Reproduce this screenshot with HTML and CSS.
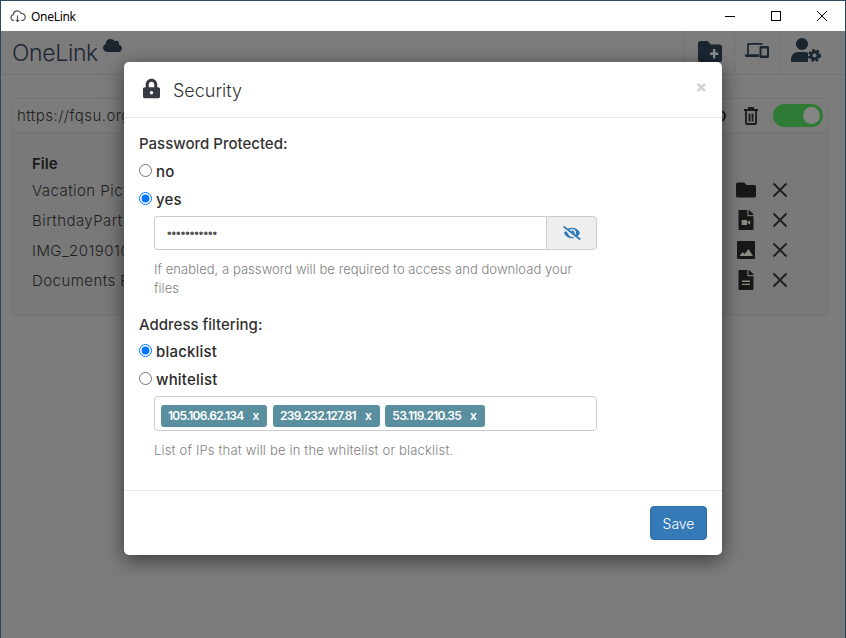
FILE: index.html
```html
<!DOCTYPE html>
<html lang="en">
<head>
<meta charset="utf-8">
<title>OneLink</title>
<link rel="stylesheet" href="styles.css">
</head>
<body>
<div class="window">
  <header class="titlebar">
    <svg class="app-icon" viewBox="0 0 16 14"><path d="M4 11.5H3.6A3 3 0 0 1 3.3 5.6 4 4 0 0 1 11 4.4 3.4 3.4 0 0 1 12.2 11.5H11" fill="none" stroke="#555" stroke-width="1.2"/><path d="M7.5 6.5v6M5.8 10.8l1.7 1.7 1.7-1.7" fill="none" stroke="#555" stroke-width="1.1"/></svg>
    <span class="app-name">OneLink</span>
    <div class="win-controls">
      <svg class="win-btn" viewBox="0 0 46 30"><path d="M18 15.5h10" stroke="#000"/></svg>
      <svg class="win-btn" viewBox="0 0 46 30"><rect x="18.5" y="10.5" width="9" height="9" fill="none" stroke="#000"/></svg>
      <svg class="win-btn" viewBox="0 0 46 30"><path d="M18 10l10 10M28 10l-10 10" stroke="#000"/></svg>
    </div>
  </header>
  <div class="app">
    <nav class="navbar">
      <div class="brand"><span class="brand-name">OneLink</span>
        <svg class="brand-cloud" viewBox="0 32 640 448" preserveAspectRatio="none"><path d="M537.6 226.6c4.1-10.7 6.4-22.4 6.4-34.6 0-53-43-96-96-96-19.7 0-38.1 6-53.3 16.2C367 64.2 315.3 32 256 32c-88.4 0-160 71.6-160 160 0 2.7.1 5.4.2 8.1C40.2 219.8 0 273.2 0 336c0 79.5 64.5 144 144 144h368c70.7 0 128-57.3 128-128 0-61.9-44-113.6-102.4-125.4z"/></svg>
      </div>
      <div class="nav-actions">
        <div class="nav-item nav-a"><svg class="nav-folder" viewBox="0 64 512 384" preserveAspectRatio="none"><path d="M464 128H272l-64-64H48C21.49 64 0 85.49 0 112v288c0 26.51 21.49 48 48 48h416c26.51 0 48-21.49 48-48V176c0-26.51-21.49-48-48-48z"/><path d="M256 272h64v-64h48v64h64v48h-64v64h-48v-64h-64z" fill="#8d8e8e"/></svg></div>
        <div class="nav-item nav-b"><svg class="nav-devices" viewBox="0 0 24 16"><path d="M3 1.8V12M3 1.8h14.5" fill="none" stroke="#1b2530" stroke-width="1.7"/><path d="M0 12.3h14v2.7H1.5A1.5 1.5 0 0 1 0 13.5z"/><path fill-rule="evenodd" d="M16 4h6.5A1.5 1.5 0 0 1 24 5.500v9a1.500 1.500 0 0 1-1.500 1.500H16a1.500 1.500 0 0 1-1.500-1.500v-9A1.500 1.500 0 0 1 16 4zm.5 2.500v7h5.500v-7z"/></svg></div>
        <div class="nav-item nav-c"><svg class="nav-user" viewBox="0 0 30 24"><circle cx="11" cy="6" r="6"/><path d="M0 24v-3a7 7 0 0 1 7-7h7a7 7 0 0 1 3 .7V24z"/><circle cx="23.500" cy="17.500" r="3.500" fill="none" stroke="#1b2530" stroke-width="2.800"/><circle cx="23.500" cy="17.500" r="5.500" fill="none" stroke="#1b2530" stroke-width="2" stroke-dasharray="2.500 2.100"/></svg></div>
      </div>
    </nav>
    <main class="content">
      <section class="link-card">
        <div class="link-row">
          <span class="link-url">https://fqsu.org/a8d3k</span>
          <span class="copy-ring"></span>
          <svg class="trash" viewBox="0 0 14 18"><path d="M0 3h14M5 3V1h4v2" fill="none" stroke="#1a1a1a" stroke-width="1.800"/><path d="M2 4v12a1 1 0 0 0 1 1h8a1 1 0 0 0 1-1V4M5.500 6.500v8M8.500 6.500v8" fill="none" stroke="#1a1a1a" stroke-width="1.800"/></svg>
          <span class="toggle"><span class="toggle-knob"></span></span>
        </div>
        <div class="file-panel">
          <div class="file-head">File</div>
          <div class="file-row"><span class="file-name">Vacation Pictures</span>
            <span class="file-icon"><svg class="ic-folder" viewBox="0 0 512 512"><path d="M464 128H272l-64-64H48C21.49 64 0 85.49 0 112v288c0 26.51 21.49 48 48 48h416c26.51 0 48-21.49 48-48V176c0-26.51-21.49-48-48-48z"/></svg></span>
            <svg class="ic-x" viewBox="0 0 16 16"><path d="M1.500 1.500l13 13M14.500 1.500l-13 13"/></svg></div>
          <div class="file-row"><span class="file-name">BirthdayParty.mp4</span>
            <span class="file-icon"><svg class="ic-file" viewBox="0 0 384 512"><path d="M224 136V0H24C10.700 0 0 10.700 0 24v464c0 13.300 10.700 24 24 24h336c13.300 0 24-10.700 24-24V160H248c-13.200 0-24-10.800-24-24zm160-14.100v6.100H256V0h6.100c6.400 0 12.500 2.500 17 7l97.900 98c4.500 4.500 7 10.600 7 16.900z"/><path d="M80 256h140v130H80zM230 310l70-40v100l-70-40z" fill="#8a8a80"/></svg></span>
            <svg class="ic-x" viewBox="0 0 16 16"><path d="M1.500 1.500l13 13M14.500 1.500l-13 13"/></svg></div>
          <div class="file-row"><span class="file-name">IMG_20190101.jpg</span>
            <span class="file-icon"><svg class="ic-image" viewBox="0 0 18 18"><rect width="18" height="18" rx="1"/><path d="M2.500 15l3-4 2 2 4-5 4.500 7z" fill="#8a8a80"/></svg></span>
            <svg class="ic-x" viewBox="0 0 16 16"><path d="M1.500 1.500l13 13M14.500 1.500l-13 13"/></svg></div>
          <div class="file-row"><span class="file-name">Documents February</span>
            <span class="file-icon"><svg class="ic-file" viewBox="0 0 384 512"><path d="M224 136V0H24C10.700 0 0 10.700 0 24v464c0 13.300 10.700 24 24 24h336c13.300 0 24-10.700 24-24V160H248c-13.200 0-24-10.800-24-24zm160-14.100v6.100H256V0h6.100c6.400 0 12.500 2.500 17 7l97.900 98c4.500 4.500 7 10.600 7 16.900z"/><path d="M90 270h204v36H90zM90 350h204v36H90z" fill="#8a8a80"/></svg></span>
            <svg class="ic-x" viewBox="0 0 16 16"><path d="M1.500 1.500l13 13M14.500 1.500l-13 13"/></svg></div>
        </div>
      </section>
    </main>
    <div class="modal" role="dialog">
      <div class="modal-header">
        <svg class="lock" viewBox="0 0 448 512"><path d="M400 224h-24v-72C376 68.200 307.800 0 224 0S72 68.200 72 152v72H48c-26.500 0-48 21.500-48 48v192c0 26.500 21.500 48 48 48h352c26.500 0 48-21.500 48-48V272c0-26.500-21.500-48-48-48zm-104 0H152v-72c0-39.700 32.300-72 72-72s72 32.300 72 72v72z"/><circle cx="224" cy="368" r="44" fill="#fff"/></svg>
        <h2 class="modal-title">Security</h2>
        <span class="modal-close">×</span>
      </div>
      <div class="modal-body">
        <div class="field-label">Password Protected:</div>
        <div class="radio-group">
          <label class="radio-row"><input type="radio" name="pw"><span>no</span></label>
          <label class="radio-row"><input type="radio" name="pw" checked><span>yes</span></label>
        </div>
        <div class="input-group">
          <input class="pw-input" type="password" value="12345678901">
          <span class="addon"><svg class="eye" viewBox="0 0 640 512"><path d="M320 400c-75.850 0-137.250-58.710-142.900-133.110L72.200 185.820c-13.790 17.300-26.480 35.590-36.720 55.590a32.350 32.350 0 0 0 0 29.190C89.710 376.410 197.070 448 320 448c26.910 0 52.870-4 77.890-10.460L346 397.390a144.130 144.130 0 0 1-26 2.610zm313.820 58.100l-110.550-85.440a331.250 331.250 0 0 0 81.250-102.070 32.350 32.350 0 0 0 0-29.190C550.290 135.590 442.930 64 320 64a308.150 308.150 0 0 0-147.320 37.700L45.460 3.370A16 16 0 0 0 23 6.180L3.370 31.450A16 16 0 0 0 6.180 53.900l588.360 454.730a16 16 0 0 0 22.460-2.810l19.640-25.270a16 16 0 0 0-2.820-22.450zm-183.720-142l-39.300-30.380A94.750 94.750 0 0 0 416 256a94.760 94.760 0 0 0-121.310-92.210A47.650 47.650 0 0 1 304 192a46.640 46.640 0 0 1-1.540 10l-73.610-56.890A142.310 142.310 0 0 1 320 112a143.920 143.920 0 0 1 144 144c0 21.630-5.290 41.790-13.900 60.110z"/></svg></span>
        </div>
        <p class="help help-pw">If enabled, a password will be required to access and download your files</p>
        <div class="field-label label-address">Address filtering:</div>
        <div class="radio-group radio-group-tight">
          <label class="radio-row"><input type="radio" name="af" checked><span>blacklist</span></label>
          <label class="radio-row"><input type="radio" name="af"><span>whitelist</span></label>
        </div>
        <div class="tags-input">
          <span class="tag">105.106.62.134<i class="tag-x">x</i></span>
          <span class="tag">239.232.127.81<i class="tag-x">x</i></span>
          <span class="tag">53.119.210.35<i class="tag-x">x</i></span>
        </div>
        <p class="help help-ip">List of IPs that will be in the whitelist or blacklist.</p>
      </div>
      <div class="modal-footer"><button class="save" type="button">Save</button></div>
    </div>
  </div>
</div>
</body>
</html>
```
FILE: styles.css
```css
* { box-sizing: border-box; }
html, body { margin: 0; height: 100%; overflow: hidden; }
body { font-family: Inter, "Noto Sans", sans-serif; background: #7c7c7c; }

.window {
  width: 846px;
  height: 638px;
  border: 1px solid #2b4a60;
  border-bottom: 0;
  display: flex;
  flex-direction: column;
  position: relative;
}

.titlebar {
  height: 30px;
  flex: none;
  background: #fff;
  display: flex;
  align-items: center;
  padding-left: 9px;
}
.app-icon { width: 16px; height: 14px; margin-right: 5px; }
.app-name { font: 12px "Noto Sans", sans-serif; color: #000; letter-spacing: -.3px; }
.win-controls { margin-left: auto; display: flex; }
.win-btn { width: 46px; height: 30px; stroke-width: 1; }

.app { flex: 1; display: flex; flex-direction: column; background: #7c7c7c; }

.navbar {
  height: 44px;
  flex: none;
  display: flex;
  justify-content: space-between;
  border-bottom: 1px solid #737373;
  padding: 0 14px 0 11px;
}
.brand { display: flex; align-items: flex-start; }
.brand-name { font-size: 23px; line-height: 44px; color: #1d2732; font-weight: 300; letter-spacing: -.35px; }
.brand-cloud { width: 19px; height: 13px; margin: 8px 0 0 5px; fill: #1b2530; }
.nav-actions { display: flex; height: 43px; }
.nav-item { display: flex; align-items: flex-start; justify-content: center; border-left: 1px solid #737373; }
.nav-a { width: 50px; padding-top: 10px; }
.nav-b { width: 45px; padding-top: 11px; }
.nav-c { width: 52px; padding-top: 7px; }
.nav-folder { width: 24px; height: 21px; fill: #1b2530; }
.nav-devices { width: 24px; height: 16px; fill: #1b2530; }
.nav-user { width: 30px; height: 24px; fill: #1b2530; }

.content { padding: 23px 17px 0 11px; }

.link-card { border: 1px solid #737373; border-radius: 3px; }
.link-row { height: 34px; display: flex; align-items: center; padding: 0 4px 0 4px; border-bottom: 1px solid #737373; }
.link-url { font-size: 15px; color: #1f1f1f; font-weight: 300; letter-spacing: .45px; }
.copy-ring { width: 12px; height: 12px; border: 2px solid #1a1a1a; border-radius: 50%; margin-left: auto; margin-right: 18px; }
.trash { width: 14px; height: 18px; margin-right: 15px; }
.toggle { width: 50px; height: 23px; background: #2f7a34; border-radius: 12px; display: flex; align-items: center; justify-content: flex-end; padding-right: 3px; }
.toggle-knob { width: 17px; height: 17px; border-radius: 50%; background: #858585; }

.file-panel { padding: 21px 39px 0 19px; height: 182px; background: #797979; }
.file-head { font-size: 15px; font-weight: 600; line-height: 20px; color: #1a1a1a; }
.file-row { display: flex; align-items: center; height: 30px; position: relative; top: 1px; }
.file-name { flex: 1; font-size: 15px; font-weight: 300; color: #1f1f1f; white-space: nowrap; letter-spacing: .45px; }
.file-icon { width: 20px; display: flex; justify-content: center; margin-right: 16px; }
.ic-folder { width: 20px; height: 20px; fill: #171717; }
.ic-file { width: 16px; height: 20px; fill: #171717; }
.ic-image { width: 18px; height: 18px; fill: #171717; }
.ic-x { width: 16px; height: 16px; fill: none; stroke: #1f1f1f; stroke-width: 1.800; }

.modal {
  position: absolute;
  left: 123px;
  top: 61px;
  width: 598px;
  height: 493px;
  background: #fff;
  border-radius: 5px;
  box-shadow: 0 5px 20px rgba(0, 0, 0, .55);
  display: flex;
  flex-direction: column;
}
.modal-header {
  height: 56px;
  flex: none;
  display: flex;
  align-items: center;
  padding: 0 15px 0 19px;
  border-bottom: 1px solid #e5e5e5;
}
.lock { width: 17px; height: 21px; fill: #343a40; margin-right: 13px; margin-top: -2px; }
.modal-title { margin: 2px 0 0; font-size: 18px; font-weight: 300; color: #333; line-height: 24px; }
.modal-close { margin-left: auto; font-size: 17px; line-height: 20px; font-weight: 700; color: #d0d0d0; margin-top: -5px; }

.modal-body { flex: 1; padding: 15px 15px 0; }
.field-label { font-size: 15px; font-weight: 500; line-height: 22px; color: #333; }
.label-address { margin-top: 16px; }
.radio-group { padding-top: 2px; }
.radio-group-tight { padding-top: 1px; }
.radio-row { display: flex; align-items: center; height: 28px; font-size: 15px; font-weight: 450; color: #2a2a2a; letter-spacing: .2px; }
.radio-row input { margin: 0 4px 2px 0; width: 13px; height: 13px; }

.input-group { display: flex; margin: 3px 0 0 15px; width: 443px; height: 34px; }
.pw-input {
  flex: 1;
  min-width: 0;
  border: 1px solid #ccc;
  border-right: 0;
  border-radius: 4px 0 0 4px;
  padding: 0 12px;
  font: 13px "Liberation Sans", sans-serif;
  color: #555;
}
.addon {
  width: 51px;
  background: #eee;
  border: 1px solid #ccc;
  border-radius: 0 4px 4px 0;
  display: flex;
  align-items: center;
  justify-content: center;
}
.eye { width: 18px; height: 14px; fill: #337ab7; }

.help { margin: 0 0 0 15px; width: 430px; font-size: 13px; line-height: 19px; color: #808080; font-weight: 300; }
.help-pw { margin-top: 10px; letter-spacing: .05px; }
.help-ip { margin-top: 10px; letter-spacing: .18px; }

.tags-input {
  margin: 3px 0 0 15px;
  width: 443px;
  height: 35px;
  border: 1px solid #ccc;
  border-radius: 4px;
  display: flex;
  align-items: flex-start;
  gap: 5.5px;
  padding: 8px 6px 0;
}
.tag {
  height: 22px;
  background: #5a8f9f;
  border-radius: 3px;
  color: #fff;
  font-size: 12px;
  font-weight: 600;
  letter-spacing: -.7px;
  line-height: 22px;
  padding: 0 8px 0 7px;
  white-space: nowrap;
}
.tag-x { font-style: normal; margin-left: 9px; letter-spacing: 0; }

.modal-footer {
  height: 65px;
  flex: none;
  border-top: 1px solid #e5e5e5;
  display: flex;
  align-items: flex-start;
  justify-content: flex-end;
  padding: 15px 15px 0 0;
}
.save {
  width: 57px;
  height: 34px;
  background: #337ab7;
  border: 1px solid #2e6da4;
  border-radius: 4px;
  color: #fff;
  font: 300 14px Inter, sans-serif;
  padding: 0;
}
```
